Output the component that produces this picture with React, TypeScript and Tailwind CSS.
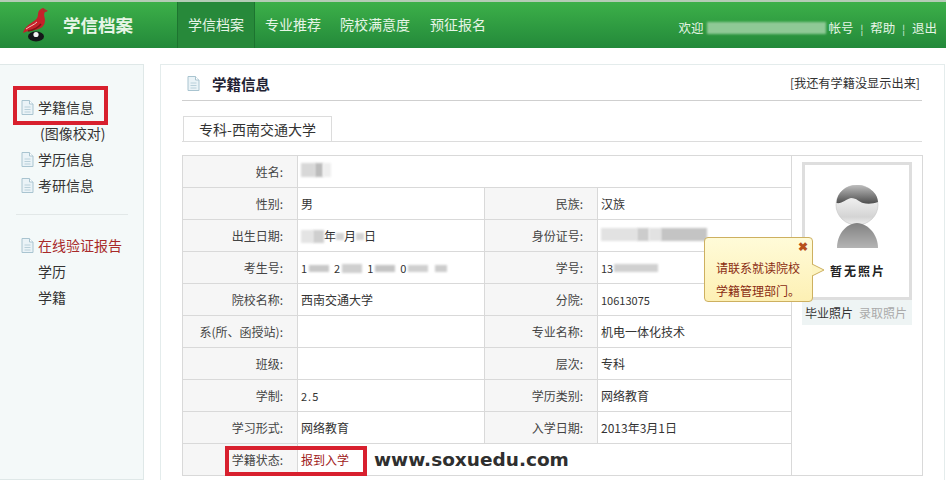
const FONT = "font-['Noto_Sans_CJK_SC','Liberation_Sans',sans-serif]";

function DocIcon({ className = "" }: { className?: string }): React.ReactElement {
  return (
    <svg width="13" height="15" viewBox="0 0 13 15" className={`shrink-0 ${className}`}>
      <path d="M1 .5h7.5L12 4v10.5H1z" fill="#eaf3f7" stroke="#a9c4d0" />
      <path d="M8.5.5V4H12" fill="#fff" stroke="#a9c4d0" />
      <path d="M3.5 7h6M3.5 9.5h6M3.5 12h6" stroke="#b9d0da" />
    </svg>
  );
}

function Logo(): React.ReactElement {
  return (
    <svg width="28" height="36" viewBox="0 0 28 36" className="shrink-0">
      <path d="M21 1c-3 1-5 3-5 6 0 3-1 5-4 7-4 3-9 5-11 12 4-2 8-3 12-3 6-1 10-4 10-10 0-3-2-5 0-8l3-1z" fill="#c6202a" />
      <path d="M21 1l4 4-4-1z" fill="#9c3a2c" />
      <path d="M4 22c4-3 8-4 11-7" fill="none" stroke="#f0c8c0" strokeWidth="1" />
      <path d="M6 24c5-1 10-3 13-7" fill="none" stroke="#7c1418" strokeWidth="1.500" />
      <ellipse cx="14" cy="29.500" rx="8" ry="5" fill="#15181a" />
      <circle cx="14" cy="27.500" r="2.600" fill="#f4f4f4" />
    </svg>
  );
}

function Avatar(): React.ReactElement {
  return (
    <svg width="45" height="64" viewBox="0 0 45 64">
      <defs>
        <linearGradient id="hair" x1="0" y1="0" x2="0" y2="1">
          <stop offset="0" stopColor="#bdbdbd" />
          <stop offset="1" stopColor="#4e4e4e" />
        </linearGradient>
        <linearGradient id="face" x1="0" y1="0" x2="0" y2="1">
          <stop offset="0.400" stopColor="#ececec" />
          <stop offset="0.800" stopColor="#d4d4d4" />
          <stop offset="1" stopColor="#f0f0f0" />
        </linearGradient>
        <linearGradient id="body" x1="0" y1="0" x2="0" y2="1">
          <stop offset="0" stopColor="#828282" />
          <stop offset="1" stopColor="#b4b4b4" />
        </linearGradient>
      </defs>
      <ellipse cx="22" cy="20" rx="21" ry="20" fill="url(#face)" stroke="#c4c4c4" strokeWidth="0.600" />
      <path d="M1.500 18C2 7 11 0 22 0s21 8 21 17c-5 2-11 2-15 1-4-1-6-5-12-5-5 1-9 6-14.500 5z" fill="url(#hair)" />
      <path d="M2 63c0-13 8-24 20-25 12 1 21 12 21 25z" fill="url(#body)" />
    </svg>
  );
}

function Smudge({ className }: { className: string }): React.ReactElement {
  return <span className={`inline-block blur-[1px] ${className}`} />;
}

function Label({ children }: { children: React.ReactNode }): React.ReactElement {
  return <td className="border border-[#d9d9d9] bg-[#f6f6f6] pr-[14px] pt-[1px] text-right text-[#444]">{children}</td>;
}

function Value({ children, span }: { children?: React.ReactNode; span?: number }): React.ReactElement {
  return <td colSpan={span} className="border border-[#d9d9d9] pl-[3px] pt-[1px] text-[#333]">{children}</td>;
}

function Sidebar(): React.ReactElement {
  return (
    <aside className="relative flex h-[416px] w-[144px] shrink-0 flex-col border border-l-0 border-[#dfe8e8] bg-[#f4f9f9] pl-[21px] pt-[29px] text-[14px] leading-[26px] text-[#333]">
      <div className="flex items-center gap-[4px]"><DocIcon />学籍信息</div>
      <div className="pl-[19px]">(图像校对)</div>
      <div className="flex items-center gap-[4px]"><DocIcon />学历信息</div>
      <div className="flex items-center gap-[4px]"><DocIcon />考研信息</div>
      <div className="mb-[17px] ml-[-5px] mr-[15px] mt-[16px] border-t border-[#e2e8e8]" />
      <div className="flex items-center gap-[4px] text-[#a82a2a]"><DocIcon />在线验证报告</div>
      <div className="pl-[17px]">学历</div>
      <div className="pl-[17px]">学籍</div>
      <div className="absolute left-[13px] top-[21px] h-[39px] w-[95px] border-[4px] border-[#d8202e]" />
    </aside>
  );
}

function Photo(): React.ReactElement {
  return (
    <div className="flex flex-col items-start pl-[10px] pt-[6px]">
      <div className="flex h-[138px] w-[110px] flex-col items-center border-[3px] border-[#dedede] bg-white pt-[20px]">
        <Avatar />
        <span className="mt-[14px] pl-[2px] text-[12px] font-bold leading-[16px] tracking-[2px] text-[#222]">暂无照片</span>
      </div>
      <div className="flex h-[25px] w-[110px] items-center gap-[6px] bg-[#eef4f4] pl-[3px] text-[12px]">
        <span className="text-[#333]">毕业照片</span>
        <span className="text-[#aaa]">录取照片</span>
      </div>
    </div>
  );
}

function InfoTable(): React.ReactElement {
  return (
    <div className="relative mt-[13px] w-[740px]">
      <table className="w-full table-fixed border-collapse text-[12px]">
        <colgroup>
          <col className="w-[115px]" />
          <col className="w-[187px]" />
          <col className="w-[113px]" />
          <col className="w-[194px]" />
          <col className="w-[131px]" />
        </colgroup>
        <tbody className="[&_tr]:h-[32px]">
          <tr>
            <Label>姓名:</Label>
            <Value span={3}>
              <Smudge className="h-[14px] w-[14px] bg-[#d8d8d8]" />
              <Smudge className="h-[14px] w-[8px] bg-[#bcbcbc]" />
              <Smudge className="h-[14px] w-[8px] bg-[#eeeeee]" />
            </Value>
            <td rowSpan={10} className="border border-[#d9d9d9] align-top"><Photo /></td>
          </tr>
          <tr>
            <Label>性别:</Label><Value>男</Value>
            <Label>民族:</Label><Value>汉族</Value>
          </tr>
          <tr>
            <Label>出生日期:</Label>
            <Value>
              <span className="flex items-center">
                <Smudge className="h-[13px] w-[12px] bg-[#e4e4e4]" />
                <Smudge className="h-[13px] w-[11px] bg-[#cfcfcf]" />年
                <Smudge className="h-[7px] w-[8px] bg-[#d4d4d4]" />月
                <Smudge className="h-[7px] w-[8px] bg-[#d4d4d4]" />日
              </span>
            </Value>
            <Label>身份证号:</Label>
            <Value>
              <Smudge className="h-[13px] w-[36px] bg-[#e2e2e2]" />
              <Smudge className="h-[13px] w-[12px] bg-[#cccccc]" />
              <Smudge className="h-[13px] w-[12px] bg-[#e2e2e2]" />
              <Smudge className="h-[13px] w-[46px] bg-[#c4c4c4]" />
            </Value>
          </tr>
          <tr>
            <Label>考生号:</Label>
            <Value>
              <span className="flex items-center gap-[2px] text-[11px]">
                1<Smudge className="h-[7px] w-[20px] bg-[#c8c8c8]" />
                <span className="pl-[3px]">2</span><Smudge className="h-[9px] w-[20px] bg-[#cfcfcf]" />
                <span className="pl-[3px]">1</span><Smudge className="h-[7px] w-[20px] bg-[#c4c4c4]" />
                <span className="pl-[3px]">0</span><Smudge className="h-[7px] w-[20px] bg-[#cfcfcf]" />
                <Smudge className="ml-[5px] h-[7px] w-[12px] bg-[#cccccc]" />
              </span>
            </Value>
            <Label>学号:</Label>
            <Value>
              <span className="flex items-center gap-[1px] text-[11px]">
                13<Smudge className="h-[8px] w-[44px] bg-[#d0d0d0]" />
              </span>
            </Value>
          </tr>
          <tr>
            <Label>院校名称:</Label><Value>西南交通大学</Value>
            <Label>分院:</Label><Value><span className="text-[11px]">10613075</span></Value>
          </tr>
          <tr>
            <Label>系(所、函授站):</Label><Value />
            <Label>专业名称:</Label><Value>机电一体化技术</Value>
          </tr>
          <tr>
            <Label>班级:</Label><Value />
            <Label>层次:</Label><Value>专科</Value>
          </tr>
          <tr>
            <Label>学制:</Label><Value><span className="text-[11px] tracking-[1px]">2.5</span></Value>
            <Label>学历类别:</Label><Value>网络教育</Value>
          </tr>
          <tr>
            <Label>学习形式:</Label><Value>网络教育</Value>
            <Label>入学日期:</Label><Value>2013年3月1日</Value>
          </tr>
          <tr>
            <Label>学籍状态:</Label>
            <Value span={3}>
              <span className="flex items-center">
                <span className="text-[#a02020]">报到入学</span>
                <span className="ml-[25px] font-['DejaVu_Sans',sans-serif] text-[18.500px] font-bold leading-[20px] text-[#2f2f2f]">www.soxuedu.com</span>
              </span>
            </Value>
          </tr>
        </tbody>
      </table>
      <div className="absolute left-[43px] top-[291px] h-[30px] w-[142px] border-[4px] border-[#d8202e]" />
      <div className="absolute left-[522px] top-[82px] h-[65px] w-[109px] rounded-[4px] border border-[#cdb060] bg-gradient-to-b from-[#fffbd8] to-[#fdf0b4] pl-[11px] pt-[18px] text-[12px] leading-[23px] text-[#8a2c12]">
        <span className="absolute right-[4px] top-[1px] text-[12px] font-bold leading-[14px] text-[#b8501a]">✖</span>
        <div>请联系就读院校</div>
        <div>学籍管理部门。</div>
        <svg width="13" height="12" viewBox="0 0 13 12" className="absolute left-[107px] top-[26px]">
          <path d="M0 0l12 6-12 6z" fill="#fdf4c0" />
          <path d="M0 0l12 6-12 6" fill="none" stroke="#cdb060" />
        </svg>
      </div>
    </div>
  );
}

export default function App(): React.ReactElement {
  return (
    <div className={`flex h-[480px] w-[946px] flex-col overflow-hidden bg-white ${FONT}`}>
      {/* Header */}
      <header className="flex h-[48px] shrink-0 items-stretch border-t-2 border-[#b4ccb6] bg-gradient-to-b from-[#3cb049] to-[#23893a] text-[#e6f5e6]">
        <div className="flex w-[177px] items-center gap-[13px] pl-[22px]">
          <Logo />
          <span className="text-[17.500px] font-bold leading-none">学信档案</span>
        </div>
        <nav className="flex items-stretch text-[14px]">
          <a className="flex w-[78px] items-center justify-center border-x border-[#1d7430] bg-[#27893a] pb-[2px]">学信档案</a>
          <a className="ml-[10px] flex items-center pb-[2px]">专业推荐</a>
          <a className="ml-[19px] flex items-center pb-[2px]">院校满意度</a>
          <a className="ml-[20px] flex items-center pb-[2px]">预征报名</a>
        </nav>
        <div className="ml-auto flex items-center pr-[9px] pt-[6px] text-[12.500px]">
          <span>欢迎</span>
          <Smudge className="mx-[3px] h-[12px] w-[119px] bg-[#8fc996]" />
          <span>帐号</span>
          <span className="mx-[7px] text-[10px]">¦</span>
          <span>帮助</span>
          <span className="mx-[7px] text-[10px]">¦</span>
          <span>退出</span>
        </div>
      </header>

      <div className="flex flex-1 pt-[16px]">
        <Sidebar />

        {/* Main panel */}
        <main className="ml-[16px] h-[416px] w-[785px] border border-b-0 border-[#e4ecec] pl-[21px]">
          <div className="flex h-[36px] w-[740px] items-center justify-between border-b border-[#cfcfcf] pt-[2px]">
            <div className="flex items-center gap-[12px] pl-[5px]">
              <DocIcon />
              <span className="text-[14.500px] font-bold text-[#223]">学籍信息</span>
            </div>
            <span className="pr-[2px] text-[12.200px] text-[#333]">[我还有学籍没显示出来]</span>
          </div>
          <div className="mt-[15px] flex h-[26px] w-[740px] items-stretch border-b border-[#dcdcdc] pl-[1px]">
            <div className="flex w-[149px] items-center justify-center border border-b-0 border-[#dcdcdc] bg-white text-[14px] text-[#333]">专科-西南交通大学</div>
          </div>
          <InfoTable />
        </main>
      </div>
    </div>
  );
}
